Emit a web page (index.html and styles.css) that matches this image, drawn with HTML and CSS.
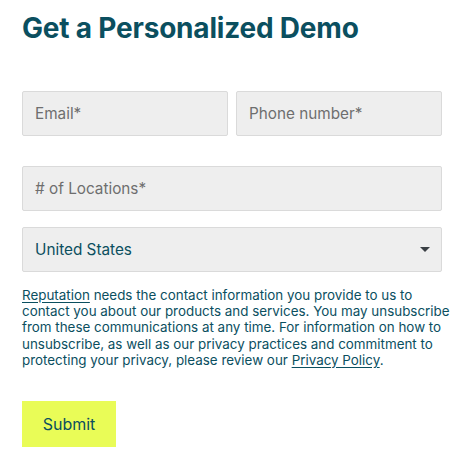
FILE: index.html
```html
<!DOCTYPE html>
<html lang="en">
<head>
<meta charset="utf-8">
<link rel="stylesheet" href="styles.css">
</head>
<body>
<main class="form-wrap">
  <h1 class="title">Get a Personalized Demo</h1>
  <form class="form">
    <div class="row two">
      <div class="field"><span class="ph">Email*</span></div>
      <div class="field"><span class="ph">Phone number*</span></div>
    </div>
    <div class="row">
      <div class="field"><span class="ph"># of Locations*</span></div>
    </div>
    <div class="row select-row">
      <div class="field select"><span class="val">United States</span><span class="caret"></span></div>
    </div>
    <p class="legal"><a href="#">Reputation</a> needs the contact information you provide to us to contact you about our products and services. You may unsubscribe from these communications at any time. For information on how to unsubscribe, as well as our privacy practices and commitment to protecting your privacy, please review our <a href="#">Privacy Policy</a>.</p>
    <div class="actions"><button type="button" class="submit">Submit</button></div>
  </form>
</main>
</body>
</html>
```

FILE: styles.css
```css
* { box-sizing: border-box; }
html, body { margin: 0; padding: 0; background: #fff; }
body { font-family: Inter, "Noto Sans", sans-serif; color: #0b4f5f; }
.form-wrap { width: 420px; margin-left: 22px; padding-top: 11px; }
.title { margin: 0; font-size: 28px; line-height: 34px; font-weight: 700; color: #0b4f5f; letter-spacing: -0.2px; }
.form { display: block; margin-top: 46px; }
.row { display: flex; gap: 8px; margin-bottom: 30px; }
.row.select-row { margin-top: -14px; margin-bottom: 0; }
.field { flex: 1; height: 45px; background: #eeeeee; border: 1px solid #dadada; border-radius: 2px; display: flex; align-items: center; padding: 0 11px 0 12px; font-size: 15.3px; }
.ph { color: #6e6e6e; }
.select { justify-content: space-between; }
.val { color: #0b4f5f; }
.caret { width: 0; height: 0; border-left: 5px solid transparent; border-right: 5px solid transparent; border-top: 5px solid #3a3f44; }
.legal { margin: 15px -20px 0 0; font-size: 13.4px; line-height: 16.2px; color: #0b4f5f; }
.legal a { color: #0b4f5f; text-decoration: underline; text-underline-offset: 2px; }
.actions { display: flex; margin-top: 33px; }
.submit { width: 94px; height: 46px; border: 0; padding: 0; background: #e9fc57; color: #0b4f5f; font-family: inherit; font-size: 16px; cursor: pointer; }
```
